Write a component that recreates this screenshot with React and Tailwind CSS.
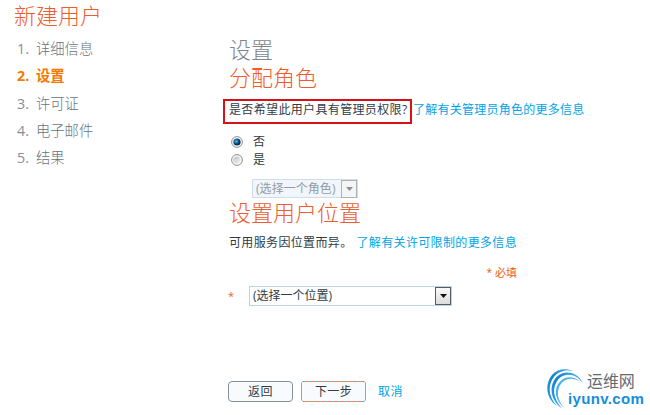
const steps = ['详细信息', '设置', '许可证', '电子邮件', '结果'];

function Heading({ children, className }) {
  return <h2 className={`h-7 text-[22px] leading-7 font-light whitespace-nowrap ${className}`}>{children}</h2>;
}

function Radio({ checked }) {
  return (
    <svg className="size-3 shrink-0" viewBox="0 0 12 12">
      <defs>
        <radialGradient id="dot" cx="40%" cy="40%">
          <stop offset="0" stopColor="#5cd0fb" />
          <stop offset="0.5" stopColor="#1668a4" />
          <stop offset="1" stopColor="#0a2b4a" />
        </radialGradient>
        <linearGradient id="face" x1="0" y1="0" x2="1" y2="1">
          <stop offset="0" stopColor="#b9bec3" />
          <stop offset="1" stopColor="#f6f6f6" />
        </linearGradient>
      </defs>
      <circle cx="6" cy="6" r="5.4" fill="#f8f8f8" stroke="#8f9193" strokeWidth="1" />
      <circle cx="6" cy="6" r="3.6" fill={checked ? 'url(#dot)' : 'url(#face)'} />
    </svg>
  );
}

function Logo() {
  return (
    <div className="flex h-[44px] w-[104px] pl-px">
      <svg className="h-[42px] w-[38px] shrink-0" viewBox="0 0 38 42">
        <defs>
          <linearGradient id="swoosh" x1="0" y1="1" x2="1" y2="0">
            <stop offset="0" stopColor="#2fa3ec" />
            <stop offset="0.5" stopColor="#1180d0" />
            <stop offset="1" stopColor="#58b8ec" />
          </linearGradient>
        </defs>
        <path d="M26 2C18-1.500 10 0 5 6C-3 16-0.500 30 10 37C1.500 28 0.500 17 6.500 8.500C11.500 2 18 0.500 26 2Z" fill="url(#swoosh)" />
        <path d="M36 15C32 3 18 0 10 7.500C1.500 16 3 31 15 39.500C6 30 4.500 18 11.500 10C19 3 30 5 36 15Z" fill="url(#swoosh)" />
        <path d="M33 12.500C26 6.500 18 7.500 13 12.500C6 20 8 32 18 39.500C9.500 31 9 21 14.500 14C19.500 9 26 8.500 33 12.500Z" fill="#4bb0ec" />
      </svg>
      <div className="-ml-[17px] flex w-[82px] shrink-0 flex-col pt-[3px]">
        <span className="pl-[19px] text-[16px] leading-[19px] tracking-[-0.1px] whitespace-nowrap text-[#626a70]">运维网</span>
        <span className="font-['Liberation_Sans',sans-serif] text-[15px] leading-4 font-bold tracking-[0.35px] whitespace-nowrap text-[#158ddd]">iyunv.com</span>
      </div>
    </div>
  );
}

export default function App() {
  return (
    <div className="flex h-[415px] w-[650px] overflow-hidden bg-white font-['Open_Sans','Noto_Sans_CJK_SC',sans-serif] text-xs text-[#303b46]">
      <aside className="w-[228px] shrink-0 pt-px pl-3.5">
        <Heading className="text-[#ef5c2e]">新建用户</Heading>
        <ol className="pt-[6px] pl-[3px] text-[14.3px]">
          {steps.map((step, i) => (
            <li key={step} className={`flex h-[27.3px] items-center ${i === 1 ? 'font-bold text-[#f57900]' : 'text-[#858e95]'}`}>
              <span className="w-[19px]">{i + 1}.</span>
              <span className={i === 1 ? 'font-bold' : 'font-light text-[#69737c]'}>{step}</span>
            </li>
          ))}
        </ol>
      </aside>

      <main className="flex flex-1 flex-col pt-[35px]">
        <Heading className="pl-px text-[#7d858b]">设置</Heading>
        <Heading className="pl-px text-[#ef5c2e]">分配角色</Heading>
        <div className="-ml-[5px] mt-[7px] flex h-[26px] items-center tracking-[0.35px] whitespace-nowrap">
          <span className="flex h-[25px] w-[189px] shrink-0 items-center border-2 border-[#d61118] pb-[3px] pl-1">是否希望此用户具有管理员权限?</span>
          <a className="pb-[3px] pl-px tracking-[0.25px] text-[#00a4e8]">了解有关管理员角色的更多信息</a>
        </div>
        <div className="mt-[9px] flex flex-col pl-[3px]">
          <label className="flex h-[18px] items-center gap-2.5"><Radio checked /><span>否</span></label>
          <label className="flex h-[18px] items-center gap-2.5"><Radio /><span>是</span></label>
        </div>
        <div className="mt-[10px] ml-6 flex h-[19px] w-[106px] items-center justify-between border border-[#cfdde6] bg-[#f0f6fb] pl-[3px] tracking-[0.05px] text-[#969a9e]">
          <span className="whitespace-nowrap">(选择一个角色)</span>
          <span className="flex h-[18px] w-4 items-center justify-center border border-[#adb2b5] bg-[#f4f5f5]">
            <svg className="h-1 w-[7px]" viewBox="0 0 7 4"><path d="M0 0H7L3.5 4Z" fill="#8d9194" /></svg>
          </span>
        </div>
        <Heading className="pl-px text-[#ef5c2e]">设置用户位置</Heading>
        <p className="mt-[7px] flex h-5 items-center pl-px tracking-[0.35px] whitespace-nowrap">
          <span>可用服务因位置而异。</span>
          <a className="pl-1 text-[#00a4e8]">了解有关许可限制的更多信息</a>
        </p>
        <p className="mt-2.5 flex h-5 w-[289px] items-center justify-end gap-[3px] text-[11px] text-[#ea5b13]">
          <span className="text-[10px]">*</span><span>必填</span>
        </p>
        <div className="mt-[3px] flex h-5 items-center">
          <span className="w-[21px] text-[11px] text-[#ef5c2e]">*</span>
          <div className="flex h-5 w-[203px] items-center justify-between border border-[#b9d5e9] pl-[3px]">
            <span>(选择一个位置)</span>
            <span className="flex h-[18px] w-4 items-center justify-center border border-[#555c62] bg-linear-to-b from-[#fafafa] to-[#dcdcdc]">
              <svg className="h-1 w-[7px]" viewBox="0 0 7 4"><path d="M0 0H7L3.5 4Z" fill="#111" /></svg>
            </span>
          </div>
        </div>
        <div className="flex flex-1 items-start pt-[62px]">
          <div className="flex h-[35px] items-start pt-[13px] tracking-[0.4px]">
            <button className="flex h-[21px] w-[65px] items-center justify-center rounded-[4px] border border-[#858f99] bg-[#f8fbfe]">返回</button>
            <button className="relative ml-2 flex h-[21px] w-[65px] items-center justify-center bg-[#f8fbfe]">
              <svg className="absolute inset-0 block h-[21px] w-[65px]" width="65" height="21" viewBox="0 0 65 21" fill="none">
                <path d="M2 0.5H63M64.5 2V19M63 20.5H2M0.5 19V2" stroke="#ff8248" />
                <path d="M2 0.5H63M64.5 2V19M63 20.5H2M0.5 19V2" stroke="#50bdf2" strokeDasharray="2 4" />
                <path d="M1 1.5L2 0.5M63 0.5L64 1.5M1 19.5L2 20.5M63 20.5L64 19.5" stroke="#47617a" />
              </svg>
              <span>下一步</span>
            </button>
            <a className="flex h-[21px] items-center pl-3 text-[#00a4e8]">取消</a>
          </div>
          <div className="ml-auto w-[104px] pt-px"><Logo /></div>
        </div>
      </main>
    </div>
  );
}
